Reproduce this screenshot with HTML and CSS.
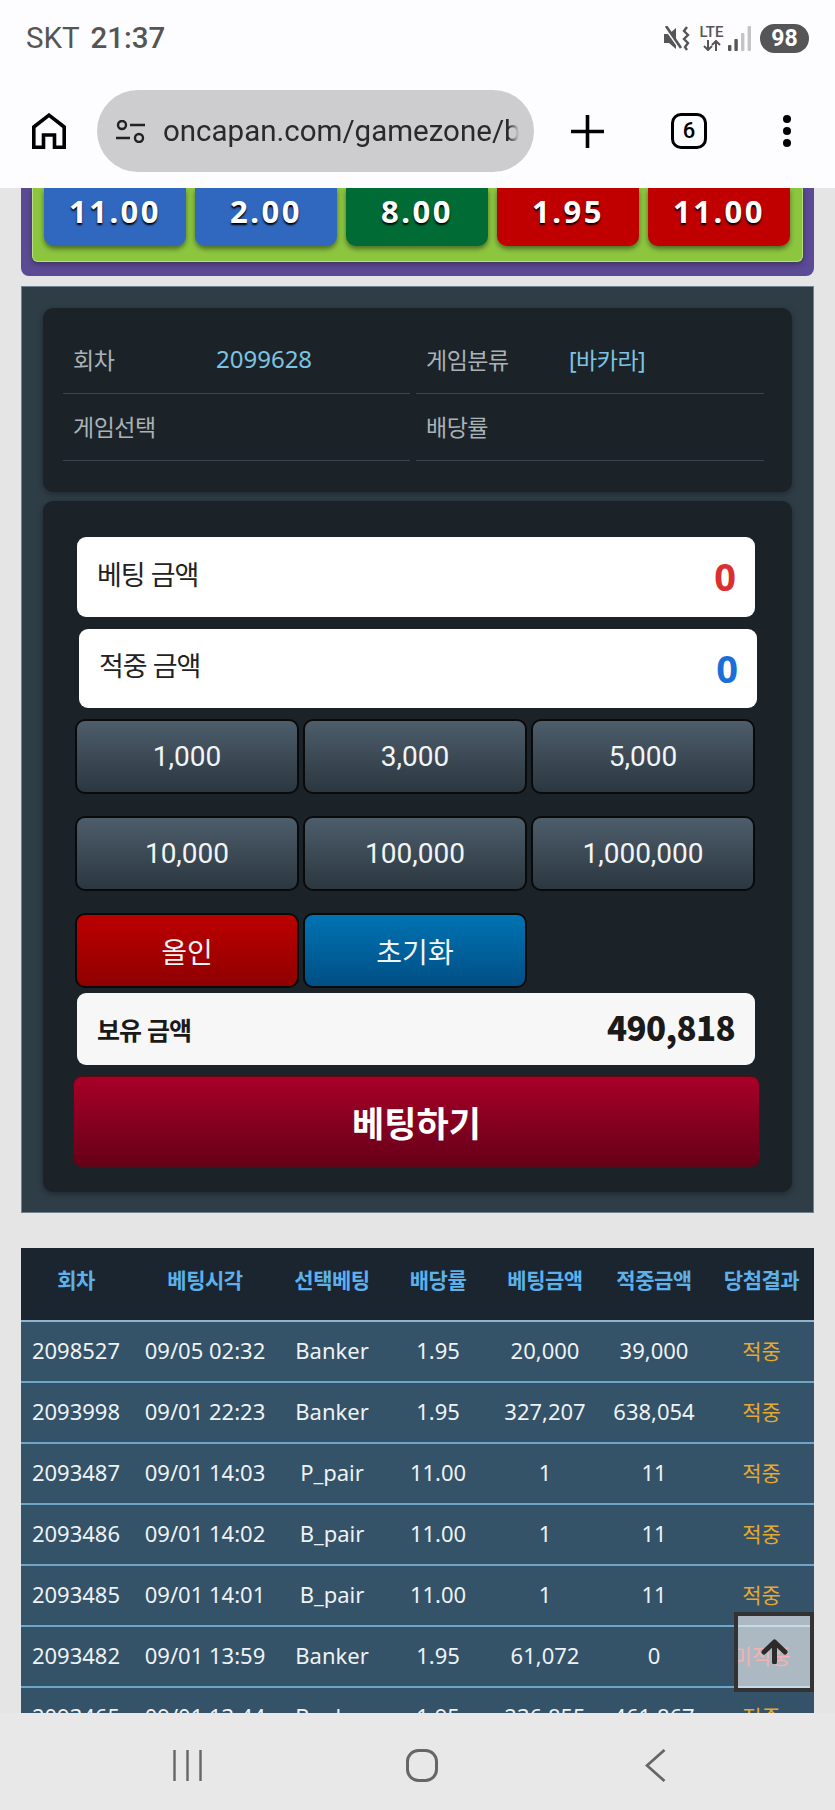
FILE: index.html
```html
<!DOCTYPE html>
<html lang="ko">
<head>
  <meta charset="UTF-8">
  <meta name="viewport" content="width=device-width, initial-scale=1.0">
  <title>oncapan gamezone</title>
  <link rel="stylesheet" href="styles.css">
</head>
<body>
  <div class="phone">
    <div class="statusbar">
      <div class="clock">SKT <b>21:37</b></div>
      <div class="status-icons">
        <svg class="ico-mute" width="27" height="25" viewBox="0 0 27 25">
          <path d="M0 8h5L12 2v21l-7-6H0z" fill="#555"/>
          <path d="M1 1l16 23" stroke="#fdfdff" stroke-width="3"/>
          <path d="M2 0l15 22" stroke="#555" stroke-width="2.6"/>
          <path d="M23 1l-3 4 4 4-4 4 4 4-3 4 2 3" fill="none" stroke="#555" stroke-width="2.4"/>
        </svg>
        <div class="lte">
          <span>LTE</span>
          <svg width="18" height="11" viewBox="0 0 18 11">
            <path d="M5 0v10M1 6l4 4 4-4" fill="none" stroke="#555" stroke-width="2"/>
            <path d="M13 11V1M9 5l4-4 4 4" fill="none" stroke="#555" stroke-width="2"/>
          </svg>
        </div>
        <svg class="ico-signal" width="23" height="25" viewBox="0 0 23 25">
          <rect x="0" y="19" width="3.4" height="6" rx="1" fill="#555"/>
          <rect x="6.4" y="13" width="3.4" height="12" rx="1" fill="#555"/>
          <rect x="13" y="7" width="3.4" height="18" rx="1" fill="#c4c4c4"/>
          <rect x="19.6" y="0" width="3.4" height="25" rx="1" fill="#c4c4c4"/>
        </svg>
        <div class="battery">98</div>
      </div>
    </div>

    <div class="toolbar">
      <svg class="ico-home" width="34" height="36" viewBox="0 0 34 36">
        <path d="M1.800 34.200V14L17 2.200 32.200 14v20.200H22.500V22h-11v12.200z" fill="none" stroke="#000" stroke-width="3.600"/>
      </svg>
      <div class="urlbar">
        <svg width="29" height="23" viewBox="0 0 29 23">
          <circle cx="6" cy="5" r="4" fill="none" stroke="#222" stroke-width="2.4"/>
          <path d="M14 5h15M0 18h14" stroke="#222" stroke-width="2.6"/>
          <circle cx="23" cy="18" r="4" fill="none" stroke="#222" stroke-width="2.4"/>
        </svg>
        <span class="url">oncapan.com/gamezone/baccarat</span>
      </div>
      <svg class="ico-plus" width="33" height="33" viewBox="0 0 33 33">
        <path d="M16.500 0v33M0 16.500h33" stroke="#000" stroke-width="3.600"/>
      </svg>
      <div class="tabs">6</div>
      <div class="dots"><i></i><i></i><i></i></div>
    </div>

    <div class="page">
      <div class="odds-panel">
        <div class="odds-inner">
          <div class="odd blue">11.00</div>
          <div class="odd blue">2.00</div>
          <div class="odd green">8.00</div>
          <div class="odd red">1.95</div>
          <div class="odd red">11.00</div>
        </div>
      </div>

      <div class="bet-panel">
        <div class="card info-card">
          <div class="info-cell"><span class="info-label">회차</span><span class="info-value num">2099628</span></div>
          <div class="info-cell"><span class="info-label">게임분류</span><span class="info-value">[바카라]</span></div>
          <div class="info-cell"><span class="info-label">게임선택</span></div>
          <div class="info-cell"><span class="info-label">배당률</span></div>
        </div>

        <div class="card form-card">
          <div class="amount-row">
            <span>베팅 금액</span><strong class="txt-red">0</strong>
          </div>
          <div class="amount-row second">
            <span>적중 금액</span><strong class="txt-blue">0</strong>
          </div>
          <div class="chips">
            <button class="chip">1,000</button>
            <button class="chip">3,000</button>
            <button class="chip">5,000</button>
            <button class="chip">10,000</button>
            <button class="chip">100,000</button>
            <button class="chip">1,000,000</button>
            <button class="chip chip-red">올인</button>
            <button class="chip chip-blue">초기화</button>
          </div>
          <div class="balance-row">
            <span>보유 금액</span><strong>490,818</strong>
          </div>
          <button class="bet-btn">베팅하기</button>
        </div>
      </div>

      <table class="history">
        <colgroup>
          <col class="c1"><col class="c2"><col class="c3"><col class="c4"><col class="c5"><col class="c6"><col class="c7">
        </colgroup>
        <thead>
          <tr><th>회차</th><th>베팅시각</th><th>선택베팅</th><th>배당률</th><th>베팅금액</th><th>적중금액</th><th>당첨결과</th></tr>
        </thead>
        <tbody>
          <tr><td>2098527</td><td>09/05 02:32</td><td>Banker</td><td>1.95</td><td>20,000</td><td>39,000</td><td class="win">적중</td></tr>
          <tr><td>2093998</td><td>09/01 22:23</td><td>Banker</td><td>1.95</td><td>327,207</td><td>638,054</td><td class="win">적중</td></tr>
          <tr><td>2093487</td><td>09/01 14:03</td><td>P_pair</td><td>11.00</td><td>1</td><td>11</td><td class="win">적중</td></tr>
          <tr><td>2093486</td><td>09/01 14:02</td><td>B_pair</td><td>11.00</td><td>1</td><td>11</td><td class="win">적중</td></tr>
          <tr><td>2093485</td><td>09/01 14:01</td><td>B_pair</td><td>11.00</td><td>1</td><td>11</td><td class="win">적중</td></tr>
          <tr><td>2093482</td><td>09/01 13:59</td><td>Banker</td><td>1.95</td><td>61,072</td><td>0</td><td class="lose">미적중</td></tr>
          <tr><td>2093465</td><td>09/01 13:44</td><td>Banker</td><td>1.95</td><td>236,855</td><td>461,867</td><td class="win">적중</td></tr>
        </tbody>
      </table>

      <button class="to-top">
        <svg width="27" height="25" viewBox="0 0 27 25">
          <path d="M13.500 23V3M3 13L13.500 3 24 13" fill="none" stroke="#2b2b2b" stroke-width="5" stroke-linecap="round" stroke-linejoin="round"/>
        </svg>
      </button>
    </div>

    <div class="navbar">
      <svg width="29" height="31" viewBox="0 0 29 31">
        <path d="M1.500 0v31M14.500 0v31M27.500 0v31" stroke="#666" stroke-width="2.400"/>
      </svg>
      <svg class="nav-home" width="32" height="33" viewBox="0 0 32 33">
        <rect x="1.500" y="1.500" width="29" height="30" rx="11" fill="none" stroke="#666" stroke-width="3"/>
      </svg>
      <svg width="21" height="33" viewBox="0 0 21 33">
        <path d="M19.500 1L2 16.500 19.500 32" fill="none" stroke="#666" stroke-width="2.800"/>
      </svg>
    </div>
  </div>
</body>
</html>
```

FILE: styles.css
```css
* {
  box-sizing: border-box;
}
body {
  margin: 0;
  background: #e5e5e5;
  font-family: "Noto Sans", "Noto Sans CJK KR", sans-serif;
}
.phone {
  width: 835px;
  height: 1810px;
  display: flex;
  flex-direction: column;
  overflow: hidden;
}

/* android status bar */
.statusbar {
  height: 80px;
  flex: none;
  background: #fdfdff;
  display: flex;
  justify-content: space-between;
  align-items: center;
  padding: 0 26px 4px 26px;
}
.clock {
  font-family: Roboto, sans-serif;
  font-size: 29.5px;
  color: #555;
  word-spacing: 4px;
}
.clock b {
  font-weight: 500;
}
.status-icons {
  display: flex;
  align-items: center;
}
.ico-mute {
  margin-right: 8px;
}
.lte {
  width: 25px;
  display: flex;
  flex-direction: column;
  align-items: center;
  gap: 2px;
  margin-right: 4px;
}
.lte span {
  font-family: Roboto, sans-serif;
  font-size: 15px;
  font-weight: 500;
  line-height: 12px;
  color: #555;
}
.ico-signal {
  margin-right: 9px;
}
.battery {
  width: 49px;
  height: 29px;
  border-radius: 15px;
  background: #555;
  color: #fff;
  font-family: Roboto, sans-serif;
  font-size: 23px;
  font-weight: 700;
  line-height: 29px;
  text-align: center;
}

/* browser toolbar */
.toolbar {
  height: 108px;
  flex: none;
  background: #fdfdff;
  display: flex;
  align-items: center;
  padding: 0 0 6px 32px;
}
.urlbar {
  width: 437px;
  height: 82px;
  margin-left: 31px;
  border-radius: 41px;
  background: #cdcdcf;
  display: flex;
  align-items: center;
  padding-left: 19px;
}
.url {
  width: 356px;
  margin-left: 18px;
  overflow: hidden;
  white-space: nowrap;
  font-family: Roboto, sans-serif;
  font-size: 29.5px;
  color: #2a2a2a;
  -webkit-mask-image: linear-gradient(to right, #000 97%, transparent);
  mask-image: linear-gradient(to right, #000 97%, transparent);
}
.ico-plus {
  margin-left: 37px;
}
.tabs {
  width: 36px;
  height: 36px;
  margin-left: 67px;
  border: 3.5px solid #000;
  border-radius: 10px;
  font-family: Roboto, sans-serif;
  font-size: 22px;
  font-weight: 500;
  line-height: 29px;
  text-align: center;
}
.dots {
  margin-left: 76px;
  display: flex;
  flex-direction: column;
  gap: 4px;
}
.dots i {
  width: 8px;
  height: 8px;
  border-radius: 50%;
  background: #000;
}

/* page content, scrolled under the toolbar */
.page {
  height: 1525px;
  flex: none;
  position: relative;
  overflow: hidden;
  padding: 0 21px;
  background: #e5e5e5;
}
.odds-panel {
  height: 88px;
  padding: 0 11px 14px;
  background: #5b4a94;
  border-radius: 0 0 8px 8px;
}
.odds-inner {
  height: 74px;
  padding: 0 12px 15px 11px;
  display: flex;
  gap: 9px;
  background: #8cc63f;
  border: 1px solid #b9e07f;
  border-top: none;
  border-radius: 0 0 6px 6px;
  box-shadow: 0 2px 5px rgba(0, 0, 0, 0.35);
}
.odd {
  flex: 1;
  border-radius: 0 0 10px 10px;
  box-shadow: 0 3px 5px rgba(0, 0, 0, 0.45);
  color: #fff;
  font-size: 31px;
  font-weight: 700;
  letter-spacing: 2.5px;
  line-height: 46px;
  text-align: center;
  text-shadow: 0 2px 2px #000;
}
.blue {
  background: #3068c0;
}
.green {
  background: #006b35;
}
.red {
  background: #c00000;
}

.bet-panel {
  height: 927px;
  margin-top: 10px;
  padding: 21px;
  background: #2f3d47;
  border: 1px solid #70818f;
}
.card {
  background: #1c2328;
  border-radius: 10px;
  box-shadow: 0 2px 6px rgba(0, 0, 0, 0.35);
}
.info-card {
  height: 184px;
  padding: 19px 28px 0 20px;
  display: grid;
  grid-template-columns: 347px 348px;
  grid-auto-rows: 67px;
  column-gap: 6px;
}
.info-cell {
  display: flex;
  align-items: center;
  padding: 0 0 3px 10px;
  border-bottom: 1px solid #3a454d;
  font-size: 23px;
}
.info-label {
  width: 143px;
  color: #aab2b7;
  letter-spacing: -0.5px;
}
.info-value {
  color: #7cc3e2;
  letter-spacing: -0.5px;
}
.info-value.num {
  font-size: 24px;
  letter-spacing: 0;
}

.form-card {
  height: 691px;
  margin-top: 9px;
  padding: 36px 37px 0 34px;
}
.amount-row {
  height: 80px;
  padding: 0 19px 0 20px;
  display: flex;
  justify-content: space-between;
  align-items: center;
  background: #fff;
  border-radius: 9px;
  color: #222;
  font-size: 27px;
  letter-spacing: -1px;
}
.amount-row span {
  margin-top: -8px;
}
.amount-row strong {
  font-size: 38px;
  letter-spacing: 0;
  margin-top: -2px;
}
.amount-row.second {
  height: 79px;
  margin: 12px -2px 0 2px;
}
.txt-red {
  color: #dc2f2f;
}
.txt-blue {
  color: #1a6fd8;
}
.chips {
  margin: 11px 0 0 -2px;
  display: grid;
  grid-template-columns: repeat(3, 1fr);
  grid-auto-rows: 75px;
  gap: 22px 4px;
}
.chip {
  border: 2px solid #0a0a0a;
  border-radius: 10px;
  background: linear-gradient(to bottom, #4d5d6b, #2b3740);
  color: #f2f4f5;
  font-family: Roboto, "Noto Sans CJK KR", sans-serif;
  font-size: 28px;
  padding: 0;
}
.chip-red {
  background: linear-gradient(to bottom, #bd0000, #8f0000);
}
.chip-blue {
  background: linear-gradient(to bottom, #0073b3, #004f85);
}
.balance-row {
  height: 72px;
  margin-top: 5px;
  padding: 0 20px;
  display: flex;
  justify-content: space-between;
  align-items: center;
  background: #f7f7f8;
  border-radius: 9px;
  color: #1a1a1a;
  font-family: "Noto Sans CJK KR", sans-serif;
  font-size: 25px;
  font-weight: 700;
  letter-spacing: -1px;
}
.balance-row strong {
  font-size: 33px;
  letter-spacing: -0.6px;
  margin-top: -4px;
}
.bet-btn {
  display: block;
  width: 687px;
  height: 91px;
  margin: 11px 0 0 -4px;
  border: 1px solid #5a0a16;
  border-radius: 9px;
  background: linear-gradient(to bottom, #a80028, #660018);
  color: #fff;
  font-family: "Noto Sans CJK KR", sans-serif;
  font-size: 35px;
  font-weight: 700;
  padding: 0;
}

/* betting history */
.history {
  width: 793px;
  margin-top: 35px;
  table-layout: fixed;
  border-collapse: collapse;
  background: #345268;
  color: #eef2f5;
  text-align: center;
}
.c1 { width: 110px; }
.c2 { width: 148px; }
.c3 { width: 106px; }
.c4 { width: 106px; }
.c5 { width: 108px; }
.c6 { width: 110px; }
.c7 { width: 105px; }
.history th {
  height: 73px;
  padding: 0 0 10px;
  background: #1a2530;
  border-bottom: 2px solid #8fb4cc;
  color: #5db0ea;
  font-size: 21px;
  font-weight: 700;
  letter-spacing: -0.5px;
}
.history td {
  height: 61px;
  padding: 0 0 3px;
  border-bottom: 2px solid #6ea5c8;
  font-size: 22px;
  white-space: nowrap;
}
.history .win {
  color: #e6a92f;
  font-size: 21px;
}
.history .lose {
  color: #e03c3c;
  font-size: 21px;
}
.to-top {
  position: absolute;
  left: 734px;
  top: 1424px;
  width: 80px;
  height: 80px;
  padding: 0 0 2px;
  border: 4px solid #333;
  background: rgba(255, 255, 255, 0.6);
  display: flex;
  justify-content: center;
  align-items: center;
}

.navbar {
  flex: 1;
  background: #e8e8e8;
  display: flex;
  justify-content: space-between;
  align-items: center;
  padding: 7px 169px 0 173px;
}
.nav-home {
  margin-right: 4px;
}
```
